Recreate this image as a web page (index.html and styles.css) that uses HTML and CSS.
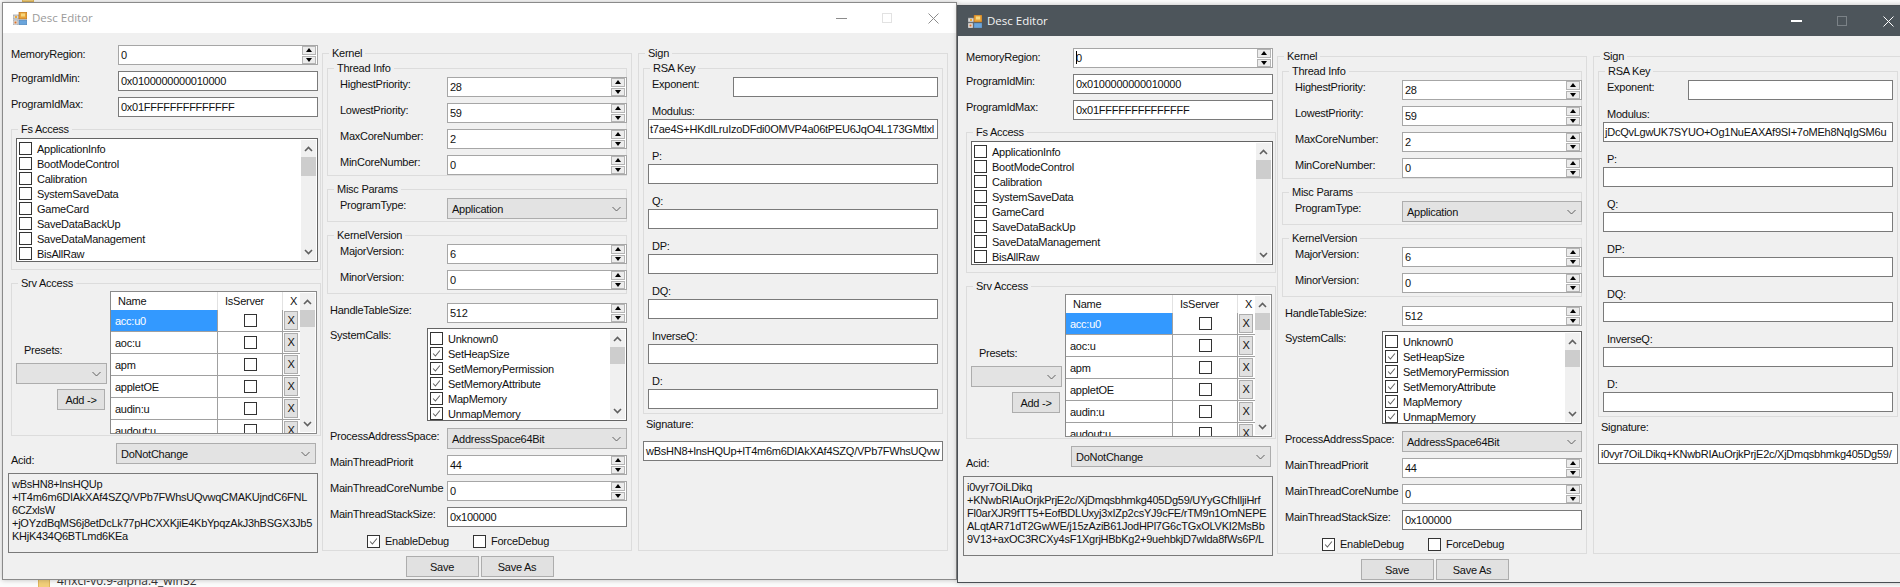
FILE: index.html
```html
<!DOCTYPE html>
<html lang="en">
<head>
    <meta charset="UTF-8">
    <title>Desc Editor</title>
    <link rel="stylesheet" href="styles.css">
</head>
<body>
<svg class="defs" aria-hidden="true">
    <symbol id="chev-up" viewBox="0 0 9 6"><path d="M1 5 4.5 1.5 8 5" fill="none" stroke="#606060" stroke-width="1.6"/></symbol>
    <symbol id="chev-down" viewBox="0 0 9 6"><path d="M1 1 4.5 4.5 8 1" fill="none" stroke="#606060" stroke-width="1.6"/></symbol>
    <symbol id="combo-down" viewBox="0 0 9 6"><path d="M.5 1 4.5 5 8.5 1" fill="none" stroke="#606060" stroke-width="1"/></symbol>
    <symbol id="tick" viewBox="0 0 13 13"><path d="M2.5 6.5 5.2 9.5 10.5 3" fill="none" stroke="#606060" stroke-width="1.2"/></symbol>
    <symbol id="app-icon" viewBox="0 0 14 13">
        <rect x="0" y="3" width="6" height="4" fill="#d8d8d8" stroke="#8a8a8a" stroke-width=".6"/>
        <rect x="2" y="4" width="2" height="2" fill="#e9a93c"/>
        <rect x="6" y="0" width="8" height="7" fill="#e8a33a" stroke="#a8641c" stroke-width=".6"/>
        <rect x="8" y="1.5" width="4" height="3" fill="#f6d77e"/>
        <rect x="0" y="8" width="5" height="5" fill="#e4e4e4" stroke="#8a8a8a" stroke-width=".6"/>
        <rect x="1.5" y="9.5" width="2" height="2" fill="#d9702a"/>
        <rect x="6" y="8" width="8" height="5" fill="#6aa5dc" stroke="#5a7fa8" stroke-width=".6"/>
    </symbol>
</svg>

<div class="desktop">
    <div class="desk-item desk-item-top"><span class="folder"></span></div>
    <div class="desk-item desk-item-bottom"><span class="folder"></span><span class="desk-name">4nxci-v0.9-alpha.4_win32</span></div>

    <!-- left window, not focused -->
    <div class="win win-inactive win-first">
        <div class="titlebar">
            <svg class="app-icon"><use href="#app-icon"/></svg>
            <span class="win-title">Desc Editor</span>
            <span class="tb-min"></span>
            <span class="tb-max"></span>
            <svg class="tb-close" viewBox="0 0 11 11"><path d="M.5.5 10.5 10.5M10.5.5 .5 10.5"/></svg>
        </div>
        <div class="main">
            <div class="col-left">
                <div class="row row-low"><div class="lbl">MemoryRegion:</div><div class="spin"><div class="val">0</div><div class="btns"><i class="up"></i><i class="down"></i></div></div></div>
                <div class="row"><div class="lbl">ProgramIdMin:</div><div class="txt">0x0100000000010000</div></div>
                <div class="row"><div class="lbl">ProgramIdMax:</div><div class="txt">0x01FFFFFFFFFFFFFF</div></div>
                <div class="group fs-group">
                    <div class="legend">Fs Access</div>
                    <div class="listbox fs-list">
                        <div class="items">
                            <div class="item"><span class="box"></span>ApplicationInfo</div>
                            <div class="item"><span class="box"></span>BootModeControl</div>
                            <div class="item"><span class="box"></span>Calibration</div>
                            <div class="item"><span class="box"></span>SystemSaveData</div>
                            <div class="item"><span class="box"></span>GameCard</div>
                            <div class="item"><span class="box"></span>SaveDataBackUp</div>
                            <div class="item"><span class="box"></span>SaveDataManagement</div>
                            <div class="item"><span class="box"></span>BisAllRaw</div>
                        </div>
                        <div class="sb"><svg class="chev"><use href="#chev-up"/></svg><div class="thumb"></div><svg class="chev chev-end"><use href="#chev-down"/></svg></div>
                    </div>
                </div>
                <div class="group srv-group">
                    <div class="legend">Srv Access</div>
                    <div class="presets">
                        <div class="presets-lbl">Presets:</div>
                        <div class="combo combo-presets"><span></span><svg class="combo-arrow"><use href="#combo-down"/></svg></div>
                        <div class="btn btn-add">Add -&gt;</div>
                    </div>
                    <div class="grid">
                        <div class="grid-cells">
                            <div class="gh gh-name">Name</div><div class="gh gh-srv">IsServer</div><div class="gh gh-x">X</div>
                            <div class="gc gc-sel">acc:u0</div><div class="gc gc-chk"><span class="box"></span></div><div class="gc gc-x"><span class="xbtn">X</span></div>
                            <div class="gc">aoc:u</div><div class="gc gc-chk"><span class="box"></span></div><div class="gc gc-x"><span class="xbtn">X</span></div>
                            <div class="gc">apm</div><div class="gc gc-chk"><span class="box"></span></div><div class="gc gc-x"><span class="xbtn">X</span></div>
                            <div class="gc">appletOE</div><div class="gc gc-chk"><span class="box"></span></div><div class="gc gc-x"><span class="xbtn">X</span></div>
                            <div class="gc">audin:u</div><div class="gc gc-chk"><span class="box"></span></div><div class="gc gc-x"><span class="xbtn">X</span></div>
                            <div class="gc">audout:u</div><div class="gc gc-chk"><span class="box"></span></div><div class="gc gc-x"><span class="xbtn">X</span></div>
                        </div>
                        <div class="sb"><svg class="chev"><use href="#chev-up"/></svg><div class="thumb"></div><svg class="chev chev-end"><use href="#chev-down"/></svg></div>
                    </div>
                </div>
                <div class="acid-row">
                    <div class="acid-lbl">Acid:</div>
                    <div class="combo combo-acid"><span>DoNotChange</span><svg class="combo-arrow"><use href="#combo-down"/></svg></div>
                </div>
                <div class="acid-text">wBsHN8+lnsHQUp<br>+lT4m6m6DIAkXAf4SZQ/VPb7FWhsUQvwqCMAKUjndC6FNL<br>6CZxlsW<br>+jOYzdBqMS6j8etDcLk77pHCXXKjiE4KbYpqzAkJ3hBSGX3Jb5<br>KHjK434Q6BTLmd6KEa</div>
            </div>

            <div class="group kernel">
                <div class="legend">Kernel</div>
                <div class="group sub thread-info">
                    <div class="legend">Thread Info</div>
                    <div class="row"><div class="lbl">HighestPriority:</div><div class="spin"><div class="val">28</div><div class="btns"><i class="up"></i><i class="down"></i></div></div></div>
                    <div class="row"><div class="lbl">LowestPriority:</div><div class="spin"><div class="val">59</div><div class="btns"><i class="up"></i><i class="down"></i></div></div></div>
                    <div class="row"><div class="lbl">MaxCoreNumber:</div><div class="spin"><div class="val">2</div><div class="btns"><i class="up"></i><i class="down"></i></div></div></div>
                    <div class="row"><div class="lbl">MinCoreNumber:</div><div class="spin"><div class="val">0</div><div class="btns"><i class="up"></i><i class="down"></i></div></div></div>
                </div>
                <div class="group sub misc">
                    <div class="legend">Misc Params</div>
                    <div class="row"><div class="lbl">ProgramType:</div><div class="combo combo-wide"><span>Application</span><svg class="combo-arrow"><use href="#combo-down"/></svg></div></div>
                </div>
                <div class="group sub version">
                    <div class="legend">KernelVersion</div>
                    <div class="row"><div class="lbl">MajorVersion:</div><div class="spin"><div class="val">6</div><div class="btns"><i class="up"></i><i class="down"></i></div></div></div>
                    <div class="row"><div class="lbl">MinorVersion:</div><div class="spin"><div class="val">0</div><div class="btns"><i class="up"></i><i class="down"></i></div></div></div>
                </div>
                <div class="kr kr-handle"><div class="lbl">HandleTableSize:</div><div class="spin"><div class="val">512</div><div class="btns"><i class="up"></i><i class="down"></i></div></div></div>
                <div class="kr kr-calls">
                    <div class="lbl lbl-calls">SystemCalls:</div>
                    <div class="listbox calls-list">
                        <div class="items">
                            <div class="item"><span class="box"></span>Unknown0</div>
                            <div class="item"><span class="box"><svg><use href="#tick"/></svg></span>SetHeapSize</div>
                            <div class="item"><span class="box"><svg><use href="#tick"/></svg></span>SetMemoryPermission</div>
                            <div class="item"><span class="box"><svg><use href="#tick"/></svg></span>SetMemoryAttribute</div>
                            <div class="item"><span class="box"><svg><use href="#tick"/></svg></span>MapMemory</div>
                            <div class="item"><span class="box"><svg><use href="#tick"/></svg></span>UnmapMemory</div>
                        </div>
                        <div class="sb"><svg class="chev"><use href="#chev-up"/></svg><div class="thumb"></div><svg class="chev chev-end"><use href="#chev-down"/></svg></div>
                    </div>
                </div>
                <div class="kr kr-space"><div class="lbl lbl-space">ProcessAddressSpace:</div><div class="combo combo-wide"><span>AddressSpace64Bit</span><svg class="combo-arrow"><use href="#combo-down"/></svg></div></div>
                <div class="kr kr-tight"><div class="lbl">MainThreadPriorit</div><div class="spin"><div class="val">44</div><div class="btns"><i class="up"></i><i class="down"></i></div></div></div>
                <div class="kr"><div class="lbl">MainThreadCoreNumbe</div><div class="spin"><div class="val">0</div><div class="btns"><i class="up"></i><i class="down"></i></div></div></div>
                <div class="kr"><div class="lbl">MainThreadStackSize:</div><div class="txt txt-stack">0x100000</div></div>
                <div class="debug-row">
                    <div class="debug-item debug-first"><span class="box"><svg><use href="#tick"/></svg></span>EnableDebug</div>
                    <div class="debug-item"><span class="box"></span>ForceDebug</div>
                </div>
            </div>

            <div class="group sign">
                <div class="legend">Sign</div>
                <div class="group sub rsa">
                    <div class="legend">RSA Key</div>
                    <div class="exp-row"><div class="lbl">Exponent:</div><div class="txt"></div></div>
                    <div class="key-lbl key-first">Modulus:</div><div class="txt txt-key">t7ae4S+HKdILruIzoDFdi0OMVP4a06tPEU6JqO4L173GMtlxl</div>
                    <div class="key-lbl">P:</div><div class="txt txt-key"></div>
                    <div class="key-lbl">Q:</div><div class="txt txt-key"></div>
                    <div class="key-lbl">DP:</div><div class="txt txt-key"></div>
                    <div class="key-lbl">DQ:</div><div class="txt txt-key"></div>
                    <div class="key-lbl">InverseQ:</div><div class="txt txt-key"></div>
                    <div class="key-lbl">D:</div><div class="txt txt-key"></div>
                </div>
                <div class="sig-lbl">Signature:</div>
                <div class="txt txt-sig">wBsHN8+lnsHQUp+lT4m6m6DIAkXAf4SZQ/VPb7FWhsUQvw</div>
            </div>
        </div>
        <div class="actions">
            <div class="btn btn-save">Save</div>
            <div class="btn btn-save">Save As</div>
        </div>
    </div>

    <!-- right window, focused -->
    <div class="win win-active win-second">
        <div class="titlebar">
            <svg class="app-icon"><use href="#app-icon"/></svg>
            <span class="win-title">Desc Editor</span>
            <span class="tb-min"></span>
            <span class="tb-max"></span>
            <svg class="tb-close" viewBox="0 0 11 11"><path d="M.5.5 10.5 10.5M10.5.5 .5 10.5"/></svg>
        </div>
        <div class="main">
            <div class="col-left">
                <div class="row row-low"><div class="lbl">MemoryRegion:</div><div class="spin"><div class="val"><span class="caret"></span>0</div><div class="btns"><i class="up"></i><i class="down"></i></div></div></div>
                <div class="row"><div class="lbl">ProgramIdMin:</div><div class="txt">0x0100000000010000</div></div>
                <div class="row"><div class="lbl">ProgramIdMax:</div><div class="txt">0x01FFFFFFFFFFFFFF</div></div>
                <div class="group fs-group">
                    <div class="legend">Fs Access</div>
                    <div class="listbox fs-list">
                        <div class="items">
                            <div class="item"><span class="box"></span>ApplicationInfo</div>
                            <div class="item"><span class="box"></span>BootModeControl</div>
                            <div class="item"><span class="box"></span>Calibration</div>
                            <div class="item"><span class="box"></span>SystemSaveData</div>
                            <div class="item"><span class="box"></span>GameCard</div>
                            <div class="item"><span class="box"></span>SaveDataBackUp</div>
                            <div class="item"><span class="box"></span>SaveDataManagement</div>
                            <div class="item"><span class="box"></span>BisAllRaw</div>
                        </div>
                        <div class="sb"><svg class="chev"><use href="#chev-up"/></svg><div class="thumb"></div><svg class="chev chev-end"><use href="#chev-down"/></svg></div>
                    </div>
                </div>
                <div class="group srv-group">
                    <div class="legend">Srv Access</div>
                    <div class="presets">
                        <div class="presets-lbl">Presets:</div>
                        <div class="combo combo-presets"><span></span><svg class="combo-arrow"><use href="#combo-down"/></svg></div>
                        <div class="btn btn-add">Add -&gt;</div>
                    </div>
                    <div class="grid">
                        <div class="grid-cells">
                            <div class="gh gh-name">Name</div><div class="gh gh-srv">IsServer</div><div class="gh gh-x">X</div>
                            <div class="gc gc-sel">acc:u0</div><div class="gc gc-chk"><span class="box"></span></div><div class="gc gc-x"><span class="xbtn">X</span></div>
                            <div class="gc">aoc:u</div><div class="gc gc-chk"><span class="box"></span></div><div class="gc gc-x"><span class="xbtn">X</span></div>
                            <div class="gc">apm</div><div class="gc gc-chk"><span class="box"></span></div><div class="gc gc-x"><span class="xbtn">X</span></div>
                            <div class="gc">appletOE</div><div class="gc gc-chk"><span class="box"></span></div><div class="gc gc-x"><span class="xbtn">X</span></div>
                            <div class="gc">audin:u</div><div class="gc gc-chk"><span class="box"></span></div><div class="gc gc-x"><span class="xbtn">X</span></div>
                            <div class="gc">audout:u</div><div class="gc gc-chk"><span class="box"></span></div><div class="gc gc-x"><span class="xbtn">X</span></div>
                        </div>
                        <div class="sb"><svg class="chev"><use href="#chev-up"/></svg><div class="thumb"></div><svg class="chev chev-end"><use href="#chev-down"/></svg></div>
                    </div>
                </div>
                <div class="acid-row">
                    <div class="acid-lbl">Acid:</div>
                    <div class="combo combo-acid"><span>DoNotChange</span><svg class="combo-arrow"><use href="#combo-down"/></svg></div>
                </div>
                <div class="acid-text">i0vyr7OiLDikq<br>+KNwbRIAuOrjkPrjE2c/XjDmqsbhmkg405Dg59/UYyGCfhIljiHrf<br>Fl0arXJR9fTT5+EofBDLUxyj3xIZp2csYJ9cFE/rTM9n1OmNEPE<br>ALqtAR71dT2GwWE/j15zAziB61JodHPl7G6cTGxOLVKI2MsBb<br>9V13+axOC3RCXy4sF1XgrjHBbKg2+9uehbkjD7wlda8fWs6P/L</div>
            </div>

            <div class="group kernel">
                <div class="legend">Kernel</div>
                <div class="group sub thread-info">
                    <div class="legend">Thread Info</div>
                    <div class="row"><div class="lbl">HighestPriority:</div><div class="spin"><div class="val">28</div><div class="btns"><i class="up"></i><i class="down"></i></div></div></div>
                    <div class="row"><div class="lbl">LowestPriority:</div><div class="spin"><div class="val">59</div><div class="btns"><i class="up"></i><i class="down"></i></div></div></div>
                    <div class="row"><div class="lbl">MaxCoreNumber:</div><div class="spin"><div class="val">2</div><div class="btns"><i class="up"></i><i class="down"></i></div></div></div>
                    <div class="row"><div class="lbl">MinCoreNumber:</div><div class="spin"><div class="val">0</div><div class="btns"><i class="up"></i><i class="down"></i></div></div></div>
                </div>
                <div class="group sub misc">
                    <div class="legend">Misc Params</div>
                    <div class="row"><div class="lbl">ProgramType:</div><div class="combo combo-wide"><span>Application</span><svg class="combo-arrow"><use href="#combo-down"/></svg></div></div>
                </div>
                <div class="group sub version">
                    <div class="legend">KernelVersion</div>
                    <div class="row"><div class="lbl">MajorVersion:</div><div class="spin"><div class="val">6</div><div class="btns"><i class="up"></i><i class="down"></i></div></div></div>
                    <div class="row"><div class="lbl">MinorVersion:</div><div class="spin"><div class="val">0</div><div class="btns"><i class="up"></i><i class="down"></i></div></div></div>
                </div>
                <div class="kr kr-handle"><div class="lbl">HandleTableSize:</div><div class="spin"><div class="val">512</div><div class="btns"><i class="up"></i><i class="down"></i></div></div></div>
                <div class="kr kr-calls">
                    <div class="lbl lbl-calls">SystemCalls:</div>
                    <div class="listbox calls-list">
                        <div class="items">
                            <div class="item"><span class="box"></span>Unknown0</div>
                            <div class="item"><span class="box"><svg><use href="#tick"/></svg></span>SetHeapSize</div>
                            <div class="item"><span class="box"><svg><use href="#tick"/></svg></span>SetMemoryPermission</div>
                            <div class="item"><span class="box"><svg><use href="#tick"/></svg></span>SetMemoryAttribute</div>
                            <div class="item"><span class="box"><svg><use href="#tick"/></svg></span>MapMemory</div>
                            <div class="item"><span class="box"><svg><use href="#tick"/></svg></span>UnmapMemory</div>
                        </div>
                        <div class="sb"><svg class="chev"><use href="#chev-up"/></svg><div class="thumb"></div><svg class="chev chev-end"><use href="#chev-down"/></svg></div>
                    </div>
                </div>
                <div class="kr kr-space"><div class="lbl lbl-space">ProcessAddressSpace:</div><div class="combo combo-wide"><span>AddressSpace64Bit</span><svg class="combo-arrow"><use href="#combo-down"/></svg></div></div>
                <div class="kr kr-tight"><div class="lbl">MainThreadPriorit</div><div class="spin"><div class="val">44</div><div class="btns"><i class="up"></i><i class="down"></i></div></div></div>
                <div class="kr"><div class="lbl">MainThreadCoreNumbe</div><div class="spin"><div class="val">0</div><div class="btns"><i class="up"></i><i class="down"></i></div></div></div>
                <div class="kr"><div class="lbl">MainThreadStackSize:</div><div class="txt txt-stack">0x100000</div></div>
                <div class="debug-row">
                    <div class="debug-item debug-first"><span class="box"><svg><use href="#tick"/></svg></span>EnableDebug</div>
                    <div class="debug-item"><span class="box"></span>ForceDebug</div>
                </div>
            </div>

            <div class="group sign">
                <div class="legend">Sign</div>
                <div class="group sub rsa">
                    <div class="legend">RSA Key</div>
                    <div class="exp-row"><div class="lbl">Exponent:</div><div class="txt"></div></div>
                    <div class="key-lbl key-first">Modulus:</div><div class="txt txt-key">jDcQvLgwUK7SYUO+Og1NuEAXAf9SI+7oMEh8NqIgSM6u</div>
                    <div class="key-lbl">P:</div><div class="txt txt-key"></div>
                    <div class="key-lbl">Q:</div><div class="txt txt-key"></div>
                    <div class="key-lbl">DP:</div><div class="txt txt-key"></div>
                    <div class="key-lbl">DQ:</div><div class="txt txt-key"></div>
                    <div class="key-lbl">InverseQ:</div><div class="txt txt-key"></div>
                    <div class="key-lbl">D:</div><div class="txt txt-key"></div>
                </div>
                <div class="sig-lbl">Signature:</div>
                <div class="txt txt-sig">i0vyr7OiLDikq+KNwbRIAuOrjkPrjE2c/XjDmqsbhmkg405Dg59/</div>
            </div>
        </div>
        <div class="actions">
            <div class="btn btn-save">Save</div>
            <div class="btn btn-save">Save As</div>
        </div>
    </div>
</div>
</body>
</html>
```

FILE: styles.css
```css
* {
    margin: 0;
    padding: 0;
    box-sizing: border-box;
}

html, body {
    width: 100%;
    height: 100%;
    overflow: hidden;
}

body {
    font-family: "Liberation Sans", Arial, sans-serif;
    font-size: 11px;
    line-height: 14px;
    letter-spacing: -0.25px;
    color: #111;
}

.defs {
    position: absolute;
    width: 0;
    height: 0;
}

.desktop {
    position: relative;
    width: 1900px;
    height: 587px;
    overflow: hidden;
    background: #fbfbfb;
}

/* things on the desktop behind the windows */
.desk-item {
    position: absolute;
    display: flex;
    align-items: center;
    gap: 7px;
    font-family: "Open Sans", sans-serif;
    font-size: 12px;
    letter-spacing: 0;
    color: #333;
}

.desk-item-top {
    left: 22px;
    top: -11px;
}

.desk-item-bottom {
    left: 38px;
    top: 574px;
}

.folder {
    width: 12px;
    height: 13px;
    background: #f2cf7a;
    border: 1px solid #e0b65a;
}

/* windows */
.win {
    position: absolute;
    width: 955px;
    height: 578px;
    border: 1px solid #8a8a8a;
    background: #f0f0f0;
    box-shadow: 0 0 5px rgba(0, 0, 0, 0.25);
}

.win-first {
    left: 2px;
    top: 2px;
}

.win-second {
    left: 957px;
    top: 5px;
    border-color: #4a4f54;
}

.titlebar {
    display: flex;
    align-items: center;
    height: 30px;
    padding-left: 10px;
    font-family: "Open Sans", sans-serif;
    font-size: 11.5px;
    letter-spacing: 0;
}

.win-inactive .titlebar {
    background: #fff;
    color: #9a9a9a;
}

.win-active .titlebar {
    background: #4d555b;
    color: #f4f4f4;
}

.app-icon {
    width: 14px;
    height: 13px;
    margin-right: 5px;
}

.win-title {
    flex: 1;
}

.tb-min {
    width: 11px;
    height: 1px;
    margin-right: 35px;
    background: #8c8c8c;
}

.tb-max {
    width: 10px;
    height: 10px;
    margin-right: 36px;
    border: 1px solid #e2e2e2;
}

.tb-close {
    width: 11px;
    height: 11px;
    margin-right: 17px;
    stroke: #8c8c8c;
    stroke-width: 1;
    fill: none;
}

.win-active .tb-min {
    background: #fff;
    height: 2px;
}

.win-active .tb-max {
    border-color: #7b8287;
}

.win-active .tb-close {
    stroke: #fff;
}

.main {
    display: flex;
    height: 518px;
    padding-left: 5px;
}

.col-left {
    width: 313px;
    padding-top: 12px;
}

/* label + control rows */
.row {
    display: flex;
    margin-bottom: 6px;
    margin-left: 3px;
}

.row-low .lbl {
    padding-top: 2px;
}

.lbl {
    flex: none;
    width: 107px;
    white-space: nowrap;
    overflow: hidden;
}

.txt, .spin {
    height: 20px;
    background: #fff;
    line-height: 18px;
    white-space: nowrap;
    overflow: hidden;
}

.txt {
    flex: none;
    width: 200px;
    padding-left: 2px;
    border: 1px solid #7a7a7a;
}

.spin {
    display: flex;
    flex: none;
    width: 200px;
    padding-left: 1px;
    border: 1px solid #a6a6a6;
}

.val {
    flex: 1;
    padding-left: 1px;
}

.caret {
    display: inline-block;
    width: 1px;
    height: 13px;
    margin-right: -1px;
    background: #000;
    vertical-align: -2px;
}

.btns {
    display: flex;
    flex-direction: column;
    gap: 1px;
    width: 14px;
    margin-right: 1px;
}

.btns i {
    display: flex;
    justify-content: center;
    align-items: center;
    width: 14px;
    height: 9px;
    background: #ececec;
    border: 1px solid #b4b4b4;
}

.btns i::after {
    content: "";
    border-left: 3px solid transparent;
    border-right: 3px solid transparent;
}

.up::after {
    border-bottom: 4px solid #000;
}

.down::after {
    border-top: 4px solid #000;
}

/* group boxes */
.group {
    position: relative;
    border: 1px solid #dcdcdc;
}

.legend {
    position: absolute;
    left: 6px;
    top: -8px;
    padding: 0 3px;
    background: #f0f0f0;
    white-space: nowrap;
}

.fs-group {
    width: 310px;
    height: 141px;
    margin: 12px 0 0 3px;
    padding: 8px 0 0 4px;
}

.srv-group {
    display: flex;
    width: 310px;
    height: 153px;
    margin: 13px 0 0 3px;
    padding: 7px 0 0 4px;
}

/* check list */
.listbox {
    display: flex;
    background: #fff;
    border: 1px solid #646464;
    overflow: hidden;
}

.fs-list {
    width: 302px;
    height: 124px;
}

.calls-list {
    flex: none;
    width: 200px;
    height: 93px;
}

.items {
    flex: 1;
    padding: 2px 0 0 2px;
}

.item {
    display: flex;
    align-items: center;
    height: 15px;
    white-space: nowrap;
}

.box {
    flex: none;
    display: block;
    width: 13px;
    height: 13px;
    margin-right: 5px;
    background: #fff;
    border: 1px solid #333;
}

.box svg {
    display: block;
    width: 11px;
    height: 11px;
}

.sb {
    display: flex;
    flex-direction: column;
    flex: none;
    align-items: center;
    width: 15px;
    margin: 1px 1px 1px 0;
    background: #f0f0f0;
}

.chev {
    width: 9px;
    height: 6px;
    margin: 6px 0 5px;
}

.chev-end {
    margin-top: auto;
}

.thumb {
    width: 15px;
    height: 17px;
    background: #cdcdcd;
}

.fs-list .thumb {
    height: 19px;
}

/* service grid */
.presets {
    flex: none;
    width: 91px;
    padding-top: 52px;
}

.presets-lbl {
    margin: 0 0 6px 8px;
}

.combo {
    display: flex;
    align-items: center;
    justify-content: space-between;
    height: 21px;
    padding: 0 5px 0 4px;
    background: #e3e3e3;
    border: 1px solid #adadad;
}

.combo-arrow {
    width: 9px;
    height: 6px;
}

.combo-presets {
    width: 91px;
    margin-bottom: 5px;
}

.combo-wide {
    flex: none;
    width: 180px;
}

.combo-acid {
    width: 200px;
}

.btn {
    display: flex;
    align-items: center;
    justify-content: center;
    height: 21px;
    background: #e1e1e1;
    border: 1px solid #adadad;
}

.btn-add {
    width: 48px;
    margin-left: 41px;
}

.btn-save {
    width: 73px;
}

.grid {
    display: flex;
    flex: none;
    width: 207px;
    height: 143px;
    margin-left: 3px;
    background: #fff;
    border: 1px solid #8a8a8a;
    overflow: hidden;
}

.grid-cells {
    display: grid;
    flex: none;
    grid-template-columns: 107px 65px 17px;
    grid-auto-rows: 22px;
    grid-template-rows: 18px;
    width: 189px;
}

.gh {
    line-height: 18px;
    padding-left: 7px;
    background: #fff;
    border-right: 1px solid #e2e2e2;
}

.gh-x {
    border-right: 0;
}

.gc {
    display: flex;
    align-items: center;
    padding-left: 4px;
    border-right: 1px solid #a0a0a0;
    border-bottom: 1px solid #a0a0a0;
}

.gc-sel {
    background: #3399ff;
    color: #fff;
}

.gc-chk {
    justify-content: center;
    padding-left: 0;
}

.gc-chk .box {
    margin-right: 0;
}

.gc-x {
    padding-left: 1px;
    border-right: 0;
}

.xbtn {
    width: 14px;
    height: 19px;
    line-height: 17px;
    text-align: center;
    background: #e1e1e1;
    border: 1px solid #adadad;
}

.acid-row {
    display: flex;
    margin-top: 7px;
}

.acid-lbl {
    width: 108px;
    padding: 10px 0 0 3px;
}

.acid-text {
    width: 310px;
    height: 80px;
    margin-top: 6px;
    padding: 4px 0 0 3px;
    line-height: 13px;
    white-space: nowrap;
    overflow: hidden;
    border: 1px solid #7a7a7a;
}

/* kernel column */
.kernel {
    flex: none;
    width: 310px;
    height: 498px;
    margin: 20px 0 0 1px;
    padding-left: 4px;
}

.sub {
    width: 300px;
    padding: 8px 0 0 12px;
}

.thread-info {
    height: 108px;
    margin-top: 14px;
}

.misc {
    height: 33px;
    margin-top: 13px;
}

.version {
    height: 59px;
    margin-top: 13px;
}

.sub .row {
    margin-left: 0;
}

.sub .spin {
    width: 180px;
    flex: none;
}

.kr {
    display: flex;
    margin: 0 0 6px 3px;
}

.kr .lbl {
    width: 117px;
}

.kr .spin, .txt-stack {
    width: 180px;
}

.kr-handle {
    margin-top: 9px;
    margin-bottom: 5px;
}

.kr-calls {
    margin-bottom: 7px;
}

.kr .lbl-calls {
    width: 97px;
}

.kr .lbl-space {
    padding-top: 1px;
}

.debug-row {
    display: flex;
    margin: 7px 0 0 40px;
}

.debug-item {
    display: flex;
    align-items: center;
}

.debug-first {
    width: 106px;
}

/* sign column */
.sign {
    flex: none;
    width: 310px;
    height: 498px;
    margin: 20px 0 0 6px;
    padding-left: 4px;
}

.rsa {
    height: 346px;
    margin-top: 14px;
    padding: 8px 0 0 4px;
}

.exp-row {
    display: flex;
    padding-left: 4px;
}

.exp-row .lbl {
    width: 81px;
}

.exp-row .txt {
    width: 205px;
}

.key-lbl {
    height: 15px;
    margin-top: 10px;
    padding-left: 4px;
}

.key-first {
    margin-top: 7px;
}

.txt-key {
    width: 290px;
    padding-left: 1px;
}

.sig-lbl {
    margin: 3px 0 10px 3px;
}

.txt-sig {
    width: 300px;
    padding-left: 2px;
}

.actions {
    display: flex;
    justify-content: center;
    gap: 2px;
    margin-top: 5px;
}
```
